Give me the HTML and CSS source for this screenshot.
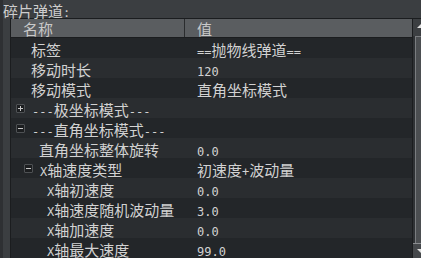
FILE: index.html
```html
<!DOCTYPE html>
<html lang="zh">
<head>
  <meta charset="UTF-8">
  <title>碎片弹道</title>
  <link rel="stylesheet" href="styles.css">
</head>
<body>
<div class="panel">
  <div class="title">碎片弹道<span class="en">:</span></div>
  <div class="frame">
    <div class="tree">
      <div class="head">
        <div class="hname">名称</div>
        <div class="hval">值</div>
      </div>
      <div class="row"><div class="name l1">标签</div><div class="val"><span class="en">==</span>抛物线弹道<span class="en">==</span></div></div>
      <div class="row"><div class="name l1">移动时长</div><div class="val"><span class="en">120</span></div></div>
      <div class="row"><div class="name l1">移动模式</div><div class="val">直角坐标模式</div></div>
      <div class="row"><div class="name g1"><span class="toggle plus"></span><span class="en">---</span>极坐标模式<span class="en">---</span></div><div class="val"></div></div>
      <div class="row"><div class="name g1"><span class="toggle"></span><span class="en">---</span>直角坐标模式<span class="en">---</span></div><div class="val"></div></div>
      <div class="row"><div class="name l2">直角坐标整体旋转</div><div class="val"><span class="en">0.0</span></div></div>
      <div class="row"><div class="name g2"><span class="toggle"></span><span class="en">X</span>轴速度类型</div><div class="val">初速度<span class="en">+</span>波动量</div></div>
      <div class="row"><div class="name l3"><span class="en">X</span>轴初速度</div><div class="val"><span class="en">0.0</span></div></div>
      <div class="row"><div class="name l3"><span class="en">X</span>轴速度随机波动量</div><div class="val"><span class="en">3.0</span></div></div>
      <div class="row"><div class="name l3"><span class="en">X</span>轴加速度</div><div class="val"><span class="en">0.0</span></div></div>
      <div class="row"><div class="name l3"><span class="en">X</span>轴最大速度</div><div class="val"><span class="en">99.0</span></div></div>
    </div>
    <div class="scroll">
      <div class="sup"><span class="arrow-up"></span></div>
      <div class="track"><div class="thumb"></div></div>
      <div class="sdown"><span class="arrow-down"></span></div>
    </div>
  </div>
</div>
</body>
</html>
```

FILE: styles.css
```css
body { margin: 0; background: #2e3033; font-family: "Noto Sans CJK SC", sans-serif; font-size: 15px; color: #d2d2d2; overflow: hidden; }
.panel { margin-left: 3px; height: 258px; background: #3b3e41; }
.title { height: 16px; padding-top: 2px; line-height: 18px; color: #cdcdcd; white-space: nowrap; }
.en { font-family: "DejaVu Sans Mono", monospace; font-size: 12px; }
.frame { display: flex; margin-left: 7px; height: 240px; border-top: 1px solid #1b1d1f; border-left: 1px solid #1b1d1f; }
.tree { flex: 1; background: #232629; overflow: hidden; }
.head { display: flex; height: 19px; background: #5a5d60; border-bottom: 1px solid #1b1d1f; box-sizing: border-box; color: #c9c9c9; }
.hname { width: 174px; height: 18px; padding: 1px 0 0 12px; border-right: 1px solid #2a2c2e; box-sizing: border-box; line-height: 18px; }
.hval { padding: 1px 0 0 12px; line-height: 18px; }
.row { display: flex; height: 20px; }
.row:nth-child(odd) { background: #2a2d30; }
.name, .val { height: 20px; line-height: 18px; padding-top: 3px; box-sizing: border-box; white-space: nowrap; }
.name { width: 174px; flex: none; }
.val { padding-left: 12px; }
.l1 { padding-left: 20px; }
.l2 { padding-left: 28px; }
.l3 { padding-left: 36px; }
.g1 { padding-left: 5px; }
.g2 { padding-left: 13px; }
.toggle { display: inline-block; position: relative; vertical-align: top; width: 9px; height: 9px; margin: 3px 7px 0 0; border: 1px solid #4e5154; border-radius: 1px; background: #1c1e20; box-sizing: border-box; }
.toggle::before { content: ""; position: absolute; left: 1px; top: 3px; width: 5px; height: 1px; background: #c8c8c8; }
.plus::after { content: ""; position: absolute; left: 3px; top: 1px; width: 1px; height: 5px; background: #c8c8c8; }
.scroll { width: 8px; display: flex; flex-direction: column; background: #3c3f42; border-left: 1px solid #1b1d1f; }
.sup { height: 17px; position: relative; }
.arrow-up { position: absolute; left: 4px; top: 5px; border-left: 4px solid transparent; border-right: 4px solid transparent; border-bottom: 4px solid #e0e0e0; }
.track { flex: 1; background: #2f3235; padding-left: 2px; }
.thumb { height: 100%; background: #4b4e51; border-top: 1px solid #7a7d80; border-left: 1px solid #7a7d80; box-sizing: border-box; }
.sdown { height: 15px; position: relative; background: #45484b; border-top: 1px solid #8a8d90; }
.arrow-down { position: absolute; left: 4px; top: 5px; border-left: 4px solid transparent; border-right: 4px solid transparent; border-top: 4px solid #e0e0e0; }
```
